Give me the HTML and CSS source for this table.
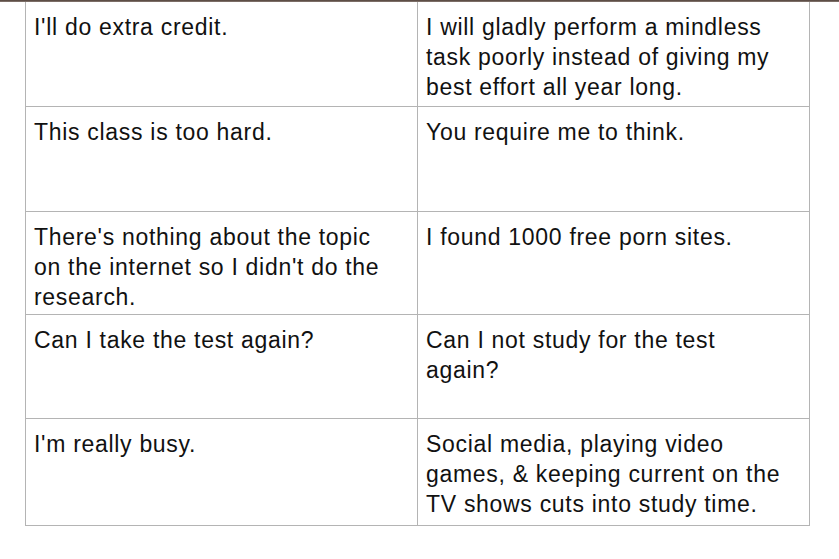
FILE: index.html
```html
<!DOCTYPE html>
<html>
<head>
<meta charset="utf-8">
<link rel="stylesheet" href="styles.css">
</head>
<body>
<div class="topbar"></div>
<div class="grid">
  <div class="cell r1">I'll do extra credit.</div>
  <div class="cell r1">I will gladly perform a mindless task poorly instead of giving my best effort all year long.</div>
  <div class="cell r2">This class is too hard.</div>
  <div class="cell r2">You require me to think.</div>
  <div class="cell r3">There's nothing about the topic on the internet so I didn't do the research.</div>
  <div class="cell r3">I found 1000 free porn sites.</div>
  <div class="cell r4">Can I take the test again?</div>
  <div class="cell r4">Can I not study for the test again?</div>
  <div class="cell r5">I'm really busy.</div>
  <div class="cell r5">Social media, playing video games, &amp; keeping current on the TV shows cuts into study time.</div>
</div>
</body>
</html>
```

FILE: styles.css
```css
html, body {
  margin: 0;
  padding: 0;
  background: #ffffff;
}
body {
  width: 839px;
  height: 559px;
  overflow: hidden;
  font-family: "Liberation Sans", Arial, sans-serif;
  color: #111111;
}
.topbar {
  height: 2px;
  background: linear-gradient(#4e3e36, #8a7d76);
}
.grid {
  margin-left: 25px;
  width: 785px;
  display: grid;
  grid-template-columns: 392px 392px;
  border-left: 1px solid #b4b4b4;
}
.cell {
  border-right: 1px solid #b4b4b4;
  border-bottom: 1px solid #b4b4b4;
  padding: 10px 15px 0 8px;
  font-size: 23px;
  line-height: 30px;
  letter-spacing: 0.7px;
  box-sizing: border-box;
}
.r1 { height: 105px; }
.r2 { height: 105px; }
.r3 { height: 103px; }
.r4 { height: 104px; }
.r5 { height: 107px; }
```
